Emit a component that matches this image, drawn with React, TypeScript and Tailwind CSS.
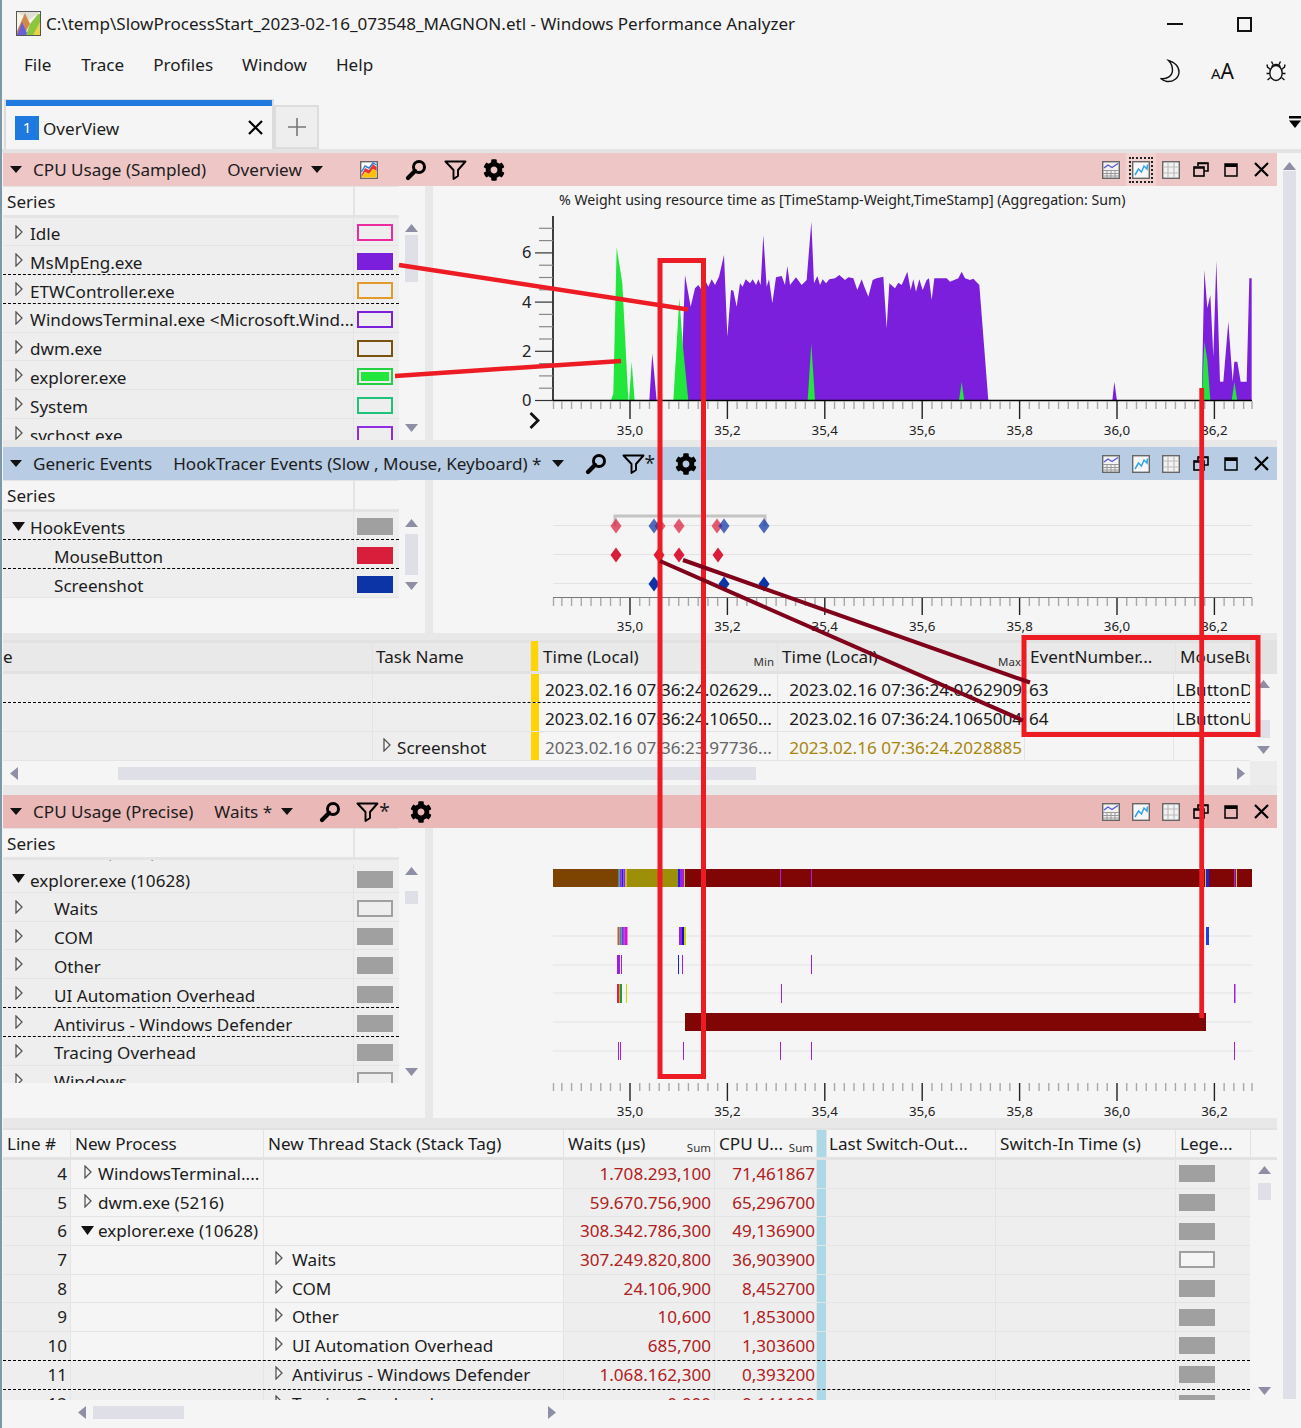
import React from 'react';
import { FaCog } from 'react-icons/fa';

type Pt = [number, number];
const zoomPts = (ox: number, pts: Pt[]) => pts.map(([x, y]) => `${ox + x / 3},${190 + y / 3}`).join(' ');

const purpleMain: Pt[] = [[487,632],[488,460],[495,255],[512,350],[525,295],[535,285],[545,300],[555,270],[565,290],[575,268],[585,285],[597,260],[612,195],[622,440],[633,300],[640,302],[650,350],[660,280],[668,290],[677,268],[690,280],[698,268],[708,285],[715,268],[722,285],[730,135],[740,290],[747,268],[757,340],[768,262],[785,258],[795,285],[802,228],[810,285],[828,262],[845,285],[860,270],[874,95],[882,280],[892,258],[900,285],[908,268],[918,280],[928,268],[945,265],[958,255],[975,270],[985,262],[1000,265],[1012,300],[1025,268],[1033,290],[1045,320],[1058,270],[1070,265],[1090,260],[1100,415],[1108,280],[1125,295],[1135,278],[1145,285],[1162,245],[1172,300],[1180,268],[1188,305],[1198,268],[1208,300],[1220,270],[1227,265],[1235,330],[1243,265],[1280,265],[1290,275],[1315,265],[1325,245],[1335,265],[1350,270],[1360,266],[1378,285],[1405,632]];
const purpleSmall: Pt[][] = [
  [[388,632],[397,490],[410,632]],
  [[1777,632],[1783,575],[1791,632]],
  [[2045,632],[2053,240],[2062,355],[2071,315],[2080,500],[2089,212],[2100,575],[2110,575],[2125,395],[2138,575],[2143,515],[2152,515],[2162,575],[2180,575],[2188,265],[2195,265],[2195,632]],
];
const greens: Pt[][] = [
  [[273,632],[280,610],[290,172],[307,280],[325,632]],
  [[327,632],[335,515],[344,632]],
  [[460,632],[478,325],[488,460],[505,632]],
  [[863,632],[874,460],[885,632]],
  [[1317,632],[1325,575],[1333,632]],
  [[2045,632],[2053,455],[2062,510],[2071,632]],
  [[2135,632],[2143,575],[2152,632]],
];

const majors = [35.0, 35.2, 35.4, 35.6, 35.8, 36.0, 36.2];
const majorX = (i: number) => 630 + 97.4 * i;
const minorXs: number[] = [];
for (let i = -8; i <= 64; i++) { if (i % 10 !== 0) minorXs.push(Math.min(1252, Math.max(553.5, 630 + 9.74 * i))); }

function AxisTicks({ y0, minorH, majorH, labelY, majorColor = '#222' }: { y0: number; minorH: number; majorH: number; labelY: number; majorColor?: string }) {
  return (
    <g>
      {minorXs.map((x, i) => <line key={i} x1={x} x2={x} y1={y0} y2={y0 + minorH} stroke="#a8a8a8" strokeWidth="1.4" />)}
      {majors.map((m, i) => <line key={m} x1={majorX(i)} x2={majorX(i)} y1={y0} y2={y0 + majorH} stroke={majorColor} strokeWidth="1.4" />)}
      {majors.map((m, i) => <text key={m} x={majorX(i)} y={labelY} textAnchor="middle" fontSize="13.3" fill="#222">{m.toFixed(1).replace('.', ',')}</text>)}
    </g>
  );
}

function Closed({ className = '' }: { className?: string }) {
  return <svg width="8" height="14" viewBox="0 0 8 14" className={className}><path d="M1 1 L7 7 L1 13 Z" fill="#f5f5f5" stroke="#555" strokeWidth="1.3" /></svg>;
}
function Open({ className = '' }: { className?: string }) {
  return <svg width="13" height="9" viewBox="0 0 13 9" className={className}><path d="M0 0 H13 L6.5 9 Z" fill="#111" /></svg>;
}
function Caret() { return <svg width="12" height="7" viewBox="0 0 12 7"><path d="M0 0 H12 L6 7 Z" fill="#111" /></svg>; }

function Magnifier() {
  return <svg width="22" height="22" viewBox="0 0 22 22"><circle cx="14" cy="8" r="5.5" fill="none" stroke="#000" strokeWidth="3" /><path d="M10 12 L3 19" stroke="#000" strokeWidth="4.2" strokeLinecap="round" /></svg>;
}
function Funnel() {
  return <svg width="23" height="20" viewBox="0 0 23 20"><path d="M1.5 1.5 H21.5 L14 10 V16 L9.5 19 V10 Z" fill="none" stroke="#000" strokeWidth="1.9" strokeLinejoin="round" /></svg>;
}
function ColorIcon() {
  return (
    <svg width="18" height="18" viewBox="0 0 18 18">
      <rect x="0.7" y="0.7" width="16.6" height="16.6" fill="#fff" stroke="#666" strokeWidth="1.4" />
      <path d="M1.5 14 L5 7 L9 9 L13 3 L16.5 6 V10 L13 8 L9 13 L5 11 L1.5 16 Z" fill="#e53935" />
      <path d="M1.5 16.5 L5 11 L9 13 L13 8 L16.5 10 V16.5 Z" fill="#ffc107" />
      <path d="M1.5 11 L5 5 L9 7 L13 2 L16.5 4" fill="none" stroke="#2e7fd6" strokeWidth="1.4" />
    </svg>
  );
}
function TableChartIcon() {
  return (
    <svg width="18" height="18" viewBox="0 0 18 18">
      <rect x="0.7" y="0.7" width="16.6" height="16.6" fill="#f2f2f2" stroke="#666" strokeWidth="1.4" />
      <path d="M1 9.5 H17 M1 12.5 H17 M1 15 H17 M5 9.5 V17 M9 9.5 V17 M13 9.5 V17" stroke="#999" strokeWidth="1" />
      <path d="M2 7 L6 4 L10 6.5 L16 2.5" fill="none" stroke="#5b5bd6" strokeWidth="1.4" />
    </svg>
  );
}
function ChartIcon() {
  return (
    <svg width="18" height="18" viewBox="0 0 18 18">
      <rect x="0.7" y="0.7" width="16.6" height="16.6" fill="#f7f7f7" stroke="#666" strokeWidth="1.4" />
      <path d="M3 14 L6.5 8 L9.5 11 L12 5 L15 8 L15.5 3.5" fill="none" stroke="#2fa4e7" strokeWidth="1.5" />
    </svg>
  );
}
function GridIcon() {
  return (
    <svg width="18" height="18" viewBox="0 0 18 18">
      <rect x="0.7" y="0.7" width="16.6" height="16.6" fill="#f2f2f2" stroke="#666" strokeWidth="1.4" />
      <path d="M1 6 H17 M1 12 H17 M6 1 V17 M12 1 V17" stroke="#bbb" strokeWidth="1.2" />
    </svg>
  );
}
function Restore() {
  return <svg width="16" height="15" viewBox="0 0 16 15"><path d="M5 4 V1 H15 V9 H11" fill="none" stroke="#000" strokeWidth="1.6" /><rect x="1" y="5" width="10" height="9" fill="none" stroke="#000" strokeWidth="1.6" /><path d="M5 1.5 H15 M1 6 H11" stroke="#000" strokeWidth="1.6" /></svg>;
}
function Maxi() {
  return <svg width="14" height="14" viewBox="0 0 14 14"><rect x="1" y="1" width="12" height="12" fill="none" stroke="#000" strokeWidth="1.5" /><rect x="1" y="1" width="12" height="3" fill="#000" /></svg>;
}
function CloseX({ size = 15 }: { size?: number }) {
  return <svg width={size} height={size} viewBox="0 0 15 15"><path d="M1 1 L14 14 M14 1 L1 14" stroke="#000" strokeWidth="2.2" /></svg>;
}

function WindowIcons({ active }: { active?: boolean }) {
  return (
    <div className="flex h-full items-center">
      <div className="flex w-[30px] justify-center"><TableChartIcon /></div>
      <div className={active ? 'flex h-full w-[30px] items-center justify-center bg-[#f3d2d2]' : 'flex w-[30px] justify-center'}>
        <div className={active ? 'flex h-[26px] w-[24px] items-center justify-center border-2 border-dotted border-[#222]' : 'flex'}><ChartIcon /></div>
      </div>
      <div className="flex w-[30px] justify-center"><GridIcon /></div>
      <div className="flex w-[30px] justify-center"><Restore /></div>
      <div className="flex w-[30px] justify-center"><Maxi /></div>
      <div className="flex w-[30px] justify-center"><CloseX /></div>
    </div>
  );
}

function HeaderBar({ bg, children, active }: { bg: string; children: React.ReactNode; active?: boolean }) {
  return (
    <div className={`flex h-[33px] items-center justify-between pl-[7px] pr-[1px] ${bg}`}>
      <div className="flex h-full items-center">{children}</div>
      <WindowIcons active={active} />
    </div>
  );
}

type RowT = { label: string; open?: boolean; closed?: boolean; indent?: boolean; swatch: string; dashed?: boolean };

function SeriesRow({ r }: { r: RowT }) {
  return (
    <div className={`flex h-[28.8px] shrink-0 border-b ${r.dashed ? 'border-dashed border-black' : 'border-[#e4e4e4]'} bg-[#eeeeee]`}>
      <div className="relative flex w-[351px] items-center border-r border-[#e4e4e4]">
        {r.closed && <Closed className="absolute left-[12px] top-[7px]" />}
        {r.open && <Open className="absolute left-[9px] top-[10px]" />}
        <span className={`mt-[5px] whitespace-nowrap text-[17.1px] ${r.indent ? 'pl-[51px]' : 'pl-[27px]'}`}>{r.label}</span>
      </div>
      <div className="flex flex-1 items-center pl-[3px]"><div className={`mt-[3px] h-[17px] w-[36px] ${r.swatch}`} /></div>
    </div>
  );
}

function SeriesHead() {
  return (
    <div className="flex h-[31.5px] shrink-0 gap-[1px] border-b-[3px] border-[#e4e4e4] bg-[#e4e4e4] pt-[1px]">
      <div className="flex w-[350px] items-center bg-[#f5f5f5] pl-[4px] pt-[3px] text-[17.1px]">Series</div>
      <div className="ml-[1px] w-[44px] bg-[#f5f5f5]" />
    </div>
  );
}

function ArrowUp() { return <svg width="13" height="8" viewBox="0 0 13 8" className="shrink-0"><path d="M0 8 L6.5 0 L13 8 Z" fill="#8e8ea6" /></svg>; }
function ArrowDown() { return <svg width="13" height="8" viewBox="0 0 13 8" className="shrink-0"><path d="M0 0 H13 L6.5 8 Z" fill="#8e8ea6" /></svg>; }
function ArrowLeft() { return <svg width="8" height="13" viewBox="0 0 8 13" className="shrink-0"><path d="M8 0 V13 L0 6.5 Z" fill="#8e8ea6" /></svg>; }
function ArrowRight() { return <svg width="8" height="13" viewBox="0 0 8 13" className="shrink-0"><path d="M0 0 V13 L8 6.5 Z" fill="#8e8ea6" /></svg>; }

function VScroll({ className, thumb }: { className: string; thumb: string }) {
  return (
    <div className={`flex w-[13px] flex-col items-center ${className}`}>
      <ArrowUp />
      <div className={`w-[13px] shrink-0 bg-[#dfdfe8] ${thumb}`} />
      <div className="flex-1" />
      <ArrowDown />
    </div>
  );
}

const chartRed = '#ed1c24';

function Chart1() {
  return (
    <svg viewBox="433 186 844 254" width="844" height="254" className="block overflow-visible">
      <text x="559" y="205" fontSize="14.15" fill="#222">% Weight using resource time as [TimeStamp-Weight,TimeStamp] (Aggregation: Sum)</text>
      <polygon points={zoomPts(520, purpleMain)} fill="#7b1fdc" />
      {purpleSmall.map((p, i) => <polygon key={i} points={zoomPts(520, p)} fill="#7b1fdc" />)}
      {greens.map((p, i) => <polygon key={i} points={zoomPts(520, p)} fill="#22e63c" />)}
      <line x1="553" x2="553" y1="216" y2="401" stroke="#111" strokeWidth="1.6" />
      {Array.from({ length: 15 }, (_, i) => i).map((i) => (
        <line key={i} x1={i % 4 === 0 ? 535 : 539} x2="553" y1={400.5 - i * 12.3} y2={400.5 - i * 12.3} stroke={i % 4 === 0 ? '#333' : '#888'} strokeWidth="1.2" />
      ))}
      {[0, 2, 4, 6].map((v, i) => <text key={v} x="522" y={406 - i * 49.2} fontSize="16.5" fill="#222">{v}</text>)}
      <line x1="553" x2="1252" y1="400.5" y2="400.5" stroke="#000" strokeWidth="1.5" />
      <AxisTicks y0={401} minorH={8} majorH={18} labelY={435} />
      <path d="M530.5 413 L538 420.5 L530.5 428" fill="none" stroke="#111" strokeWidth="2.8" />
    </svg>
  );
}

function Diamond({ x, y, color, op = 1 }: { x: number; y: number; color: string; op?: number }) {
  return <polygon points={`${x - 5.5},${y} ${x},${y - 7.5} ${x + 5.5},${y} ${x},${y + 7.5}`} fill={color} opacity={op} />;
}

function Chart2() {
  const red = '#d91e3c';
  const blue = '#0c34a6';
  return (
    <svg viewBox="433 480 844 153" width="844" height="153" className="block overflow-visible">
      {[525.5, 554.5, 583.5].map((y) => <line key={y} x1="553" x2="1252" y1={y} y2={y} stroke="#e3e3e3" strokeWidth="1" />)}
      <path d="M615 526 V516 H765 V526" fill="none" stroke="#c4c4c4" strokeWidth="3" />
      {[616, 660, 679, 717].map((x) => <Diamond key={x} x={x} y={526} color={red} op={0.72} />)}
      {[654, 724, 764].map((x) => <Diamond key={x} x={x} y={526} color={blue} op={0.72} />)}
      {[616, 659, 679, 718].map((x) => <Diamond key={x} x={x} y={555} color={red} />)}
      {[654, 724, 764].map((x) => <Diamond key={x} x={x} y={584} color={blue} />)}
      <line x1="553" x2="1252" y1="597.5" y2="597.5" stroke="#777" strokeWidth="1.2" />
      <AxisTicks y0={598} minorH={8} majorH={17} labelY={631} />
    </svg>
  );
}

function Chart3() {
  const P = '#a020e0';
  const bars: [number, number, number, number, string][] = [
    [553, 869, 65, 18, '#7d4300'], [627, 869, 51, 18, '#9e8f08'], [685, 869, 567, 18, '#7f0604'],
    [618, 869, 1.5, 18, '#18a860'], [619.5, 869, 2, 18, P], [621.5, 869, 2, 18, '#2020e0'], [623.5, 869, 2, 18, P], [625.5, 869, 1.5, 18, '#c8c800'],
    [678, 869, 2, 18, '#2020e0'], [680, 869, 4, 18, P], [684, 869, 1, 18, '#c8c800'],
    [780, 869, 1, 18, P], [811, 869, 1, 18, P], [1205, 869, 1, 18, '#c8c800'], [1206, 869, 3, 18, '#2020e0'], [1234, 869, 1.5, 18, P], [1236, 869, 1, 18, '#c8c800'],
    [617.5, 927, 2, 18, '#e05030'], [619.5, 927, 2, 18, '#18a890'], [621.5, 927, 2, 18, P], [623.5, 927, 1, 18, '#2020e0'], [624.5, 927, 3, 18, '#e010d0'],
    [679, 927, 3, 18, P], [682, 927, 2, 18, '#1010d0'], [684, 927, 2, 18, '#c8d800'], [1206, 927, 3, 18, '#2040e0'],
    [617, 955, 3, 19, P], [621, 955, 1, 19, P], [678, 955, 1, 19, '#2020e0'], [682, 955, 1, 19, P], [811, 955, 1, 19, P],
    [617, 984, 2, 19, '#d02060'], [619, 984, 1, 19, '#e8a020'], [620, 984, 2, 19, '#18a040'], [626, 984, 1, 19, '#c8d800'], [781, 984, 1, 19, P], [1234, 984, 1.5, 19, P],
    [685, 1013, 521, 18, '#7f0604'],
    [618, 1042, 1, 18, P], [620, 1042, 1, 18, P], [683, 1042, 1, 18, P], [780, 1042, 1, 18, P], [811, 1042, 1, 18, P], [1234, 1042, 1, 18, P],
  ];
  return (
    <svg viewBox="433 828 844 290" width="844" height="290" className="block overflow-visible">
      {[936, 965, 993, 1022, 1051].map((y) => <line key={y} x1="553" x2="1252" y1={y} y2={y} stroke="#e3e3e3" strokeWidth="1" />)}
      {bars.map(([x, y, w, h, c], i) => <rect key={i} x={x} y={y} width={w} height={h} fill={c} />)}
      <AxisTicks y0={1083} minorH={8} majorH={18} labelY={1116} />
    </svg>
  );
}

const rows1: RowT[] = [
  { label: 'Idle', closed: true, swatch: 'border-2 border-[#ec2ba0]' },
  { label: 'MsMpEng.exe', closed: true, swatch: 'bg-[#7b1fdc]', dashed: true },
  { label: 'ETWController.exe', closed: true, swatch: 'border-2 border-[#e29a2a]', dashed: true },
  { label: 'WindowsTerminal.exe <Microsoft.Wind...', closed: true, swatch: 'border-2 border-[#7b1fdc]' },
  { label: 'dwm.exe', closed: true, swatch: 'border-2 border-[#7a5210]' },
  { label: 'explorer.exe', closed: true, swatch: 'border-2 border-[#22d040] bg-[#22e63c] bg-clip-content p-[2px]' },
  { label: 'System', closed: true, swatch: 'border-2 border-[#1fc27a]' },
  { label: 'svchost.exe', closed: true, swatch: 'border-2 border-[#8e2ee0]' },
];
const rows2: RowT[] = [
  { label: 'HookEvents', open: true, swatch: 'bg-[#a0a0a0]', dashed: true },
  { label: 'MouseButton', indent: true, swatch: 'bg-[#d91e3c]', dashed: true },
  { label: 'Screenshot', indent: true, swatch: 'bg-[#0c34a6]' },
];
const rows3: RowT[] = [
  { label: 'explorer.exe (10628)', open: true, swatch: 'bg-[#a0a0a0]' },
  { label: 'Waits', closed: true, indent: true, swatch: 'border-2 border-[#a0a0a0]' },
  { label: 'COM', closed: true, indent: true, swatch: 'bg-[#a0a0a0]' },
  { label: 'Other', closed: true, indent: true, swatch: 'bg-[#a0a0a0]' },
  { label: 'UI Automation Overhead', closed: true, indent: true, swatch: 'bg-[#a0a0a0]', dashed: true },
  { label: 'Antivirus - Windows Defender', closed: true, indent: true, swatch: 'bg-[#a0a0a0]', dashed: true },
  { label: 'Tracing Overhead', closed: true, indent: true, swatch: 'bg-[#a0a0a0]' },
  { label: 'Windows', closed: true, indent: true, swatch: 'border-2 border-[#a0a0a0]' },
];

type B = { line: string; proc?: string; procOpen?: boolean; stack?: string; waits: string; cpu: string; hollow?: boolean; dashed?: boolean; sel?: boolean };
const rowsB: B[] = [
  { line: '4', proc: 'WindowsTerminal....', waits: '1.708.293,100', cpu: '71,461867' },
  { line: '5', proc: 'dwm.exe (5216)', waits: '59.670.756,900', cpu: '65,296700' },
  { line: '6', proc: 'explorer.exe (10628)', procOpen: true, waits: '308.342.786,300', cpu: '49,136900' },
  { line: '7', stack: 'Waits', waits: '307.249.820,800', cpu: '36,903900', hollow: true },
  { line: '8', stack: 'COM', waits: '24.106,900', cpu: '8,452700' },
  { line: '9', stack: 'Other', waits: '10,600', cpu: '1,853000' },
  { line: '10', stack: 'UI Automation Overhead', waits: '685,700', cpu: '1,303600', dashed: true },
  { line: '11', stack: 'Antivirus - Windows Defender', waits: '1.068.162,300', cpu: '0,393200', dashed: true, sel: true },
  { line: '12', stack: 'Tracing Overhead', waits: '0,000', cpu: '0,141100', sel: true },
];

function BCell({ className, children }: { className: string; children?: React.ReactNode }) {
  return <div className={`relative flex h-full shrink-0 items-center border-r border-[#e4e4e4] ${className}`}>{children}</div>;
}

function BottomRow({ r }: { r: B }) {
  const side = r.sel ? 'bg-[#eeeeee]' : 'bg-[#f5f5f5]';
  return (
    <div className={`flex h-[28.7px] shrink-0 border-b ${r.dashed ? 'border-dashed border-black' : 'border-[#e4e4e4]'} bg-[#eeeeee] text-[17.1px]`}>
      <BCell className="w-[68px] justify-end pr-[3px]">{r.line}</BCell>
      <BCell className={`w-[193px] pl-[27px] ${side}`}>
        {r.proc && (r.procOpen ? <Open className="absolute left-[10px] top-[9px]" /> : <Closed className="absolute left-[13px] top-[5px]" />)}
        <span className="whitespace-nowrap">{r.proc}</span>
      </BCell>
      <BCell className={`w-[300px] pl-[28px] ${side}`}>
        {r.stack && <Closed className="absolute left-[11px] top-[5px]" />}
        <span className="whitespace-nowrap">{r.stack}</span>
      </BCell>
      <BCell className="w-[151px] justify-end pr-[3px] text-[#b0201c]">{r.waits}</BCell>
      <BCell className="w-[102px] justify-end pr-[1px] text-[#b0201c]">{r.cpu}</BCell>
      <div className="h-full w-[9px] shrink-0 bg-[#add8e6]" />
      <BCell className="w-[170px]" />
      <BCell className="w-[180px]" />
      <div className="flex h-full w-[75px] items-center pl-[3px]">
        <div className={`h-[17px] w-[36px] ${r.hollow ? 'border-2 border-[#a0a0a0] bg-[#f5f5f5]' : 'bg-[#a0a0a0]'}`} />
      </div>
    </div>
  );
}

function HeadCell({ className, children, tag, tagClass = 'right-[3px]' }: { className: string; children: React.ReactNode; tag?: string; tagClass?: string }) {
  return (
    <div className={`relative flex h-full shrink-0 items-center overflow-hidden whitespace-nowrap ${className}`}>
      {children}
      {tag && <span className={`absolute bottom-[1px] text-[11.5px] text-[#333] ${tagClass}`}>{tag}</span>}
    </div>
  );
}

function Table2() {
  const Row = ({ a, b, c, d, task, dash, muted }: { a: string; b: string; c?: string; d?: string; task?: string; dash?: boolean; muted?: boolean }) => (
    <div className={`flex h-[29px] shrink-0 border-b ${dash ? 'border-dashed border-black' : 'border-[#e4e4e4]'} text-[17.1px]`}>
      <div className="h-full w-[370px] shrink-0 border-r border-[#e4e4e4] bg-[#eeeeee]" />
      <div className="relative flex h-full w-[158px] shrink-0 items-center bg-[#eeeeee] pl-[24px] pt-[4px]">
        {task && <Closed className="absolute left-[10px] top-[6px]" />}
        {task}
      </div>
      <div className="h-full w-[8px] shrink-0 bg-[#ffd400]" />
      <div className={`flex h-full w-[239px] shrink-0 items-center overflow-hidden border-r border-[#e4e4e4] pl-[6px] pt-[4px] whitespace-nowrap ${muted ? 'text-[#666]' : ''}`}>{a}</div>
      <div className={`flex h-full w-[247px] shrink-0 items-center justify-end overflow-hidden border-r border-[#e4e4e4] pr-[2px] pt-[4px] whitespace-nowrap ${muted ? 'text-[#a8860b]' : ''}`}>{b}</div>
      <div className="flex h-full w-[149px] shrink-0 items-center border-r border-[#e4e4e4] pl-[4px] pt-[4px]">{c}</div>
      <div className="flex h-full w-[76px] shrink-0 items-center overflow-hidden whitespace-nowrap pl-[2px] pt-[4px]">{d}</div>
    </div>
  );
  return (
    <div className="flex h-[145px] flex-col">
      <div className="h-[34px] shrink-0 border-b-[3px] border-[#e2e2e2] bg-[#e2e2e2] pt-[3px]">
        <div className="flex h-full w-[1247px] gap-[1px] text-[17.1px]">
          <HeadCell className="w-[369px] bg-[#e9e9e9]">e</HeadCell>
          <HeadCell className="w-[157px] bg-[#e9e9e9] pl-[3px]">Task Name</HeadCell>
          <div className="mt-[-2px] h-[calc(100%+2px)] w-[7px] shrink-0 bg-[#ffd400]" />
          <HeadCell className="w-[238px] bg-[#e9e9e9] pl-[4px]" tag="Min">Time (Local)</HeadCell>
          <HeadCell className="w-[248px] bg-[#e9e9e9] pl-[4px]" tag="Max" tagClass="right-[5px]">Time (Local)</HeadCell>
          <HeadCell className="w-[148px] bg-[#e9e9e9] pl-[3px]">EventNumber...</HeadCell>
          <HeadCell className="w-[74px] bg-[#e9e9e9] pl-[4px]">MouseBu</HeadCell>
        </div>
      </div>
      <div className="flex h-[87px] shrink-0">
        <div className="flex w-[1247px] flex-col">
          <Row a="2023.02.16 07:36:24.02629..." b="2023.02.16 07:36:24.0262909" c="63" d="LButtonD" dash />
          <Row a="2023.02.16 07:36:24.10650..." b="2023.02.16 07:36:24.1065004" c="64" d="LButtonU" />
          <Row a="2023.02.16 07:36:23.97736..." b="2023.02.16 07:36:24.2028885" task="Screenshot" muted />
        </div>
        <div className="flex flex-1 justify-start pl-[7px] pt-[6px]">
          <VScroll className="h-[74px]" thumb="mt-[32px] h-[18px]" />
        </div>
      </div>
      <div className="flex h-[24px] items-center">
        <div className="flex h-full w-[1247px] items-center bg-[#f5f5f5] pl-[7px] pr-[5px]">
          <ArrowLeft />
          <div className="ml-[100px] h-[13px] w-[638px] bg-[#dfdfe8]" />
          <div className="flex-1" />
          <ArrowRight />
        </div>
        <div className="h-full flex-1 bg-[#ececec]" />
      </div>
    </div>
  );
}

function BottomTable() {
  return (
    <div className="flex h-[297px] flex-col">
      <div className="flex h-[32px] shrink-0 gap-[1px] border-y-[2px] border-b-[3px] border-[#e2e2e2] bg-[#e2e2e2] text-[17.1px]" >
        <HeadCell className="w-[67px] bg-[#f5f5f5] pl-[4px]">Line #</HeadCell>
        <HeadCell className="w-[192px] bg-[#f5f5f5] pl-[4px]">New Process</HeadCell>
        <HeadCell className="w-[299px] bg-[#f5f5f5] pl-[4px]">New Thread Stack (Stack Tag)</HeadCell>
        <HeadCell className="w-[150px] bg-[#f5f5f5] pl-[4px]" tag="Sum">Waits (µs)</HeadCell>
        <HeadCell className="w-[101px] bg-[#f5f5f5] pl-[4px]" tag="Sum">CPU U...</HeadCell>
        <div className="h-full w-[9px] shrink-0 bg-[#add8e6]" />
        <HeadCell className="w-[168px] bg-[#f5f5f5] pl-[2px]">Last Switch-Out...</HeadCell>
        <HeadCell className="w-[179px] bg-[#f5f5f5] pl-[4px]">Switch-In Time (s)</HeadCell>
        <HeadCell className="w-[74px] bg-[#f5f5f5] pl-[4px]">Lege...</HeadCell>
        <div className="h-full flex-1 bg-[#f5f5f5]" />
      </div>
      <div className="flex h-[240px] shrink-0">
        <div className="flex w-[1247px] flex-col overflow-hidden">
          {rowsB.map((r) => <BottomRow key={r.line} r={r} />)}
        </div>
        <div className="flex flex-1 pl-[8px] pt-[6px]">
          <VScroll className="h-[229px]" thumb="mt-[9px] h-[17px]" />
        </div>
      </div>
      <div className="flex h-[25px] items-center pl-[75px]">
        <ArrowLeft />
        <div className="ml-[7px] h-[13px] w-[91px] bg-[#dfdfe8]" />
        <div className="ml-[364px]"><ArrowRight /></div>
      </div>
    </div>
  );
}

function SeriesColumn({ children, scroll, h }: { children: React.ReactNode; scroll: React.ReactNode; h: string }) {
  return (
    <div className={`flex w-[422px] shrink-0 ${h}`}>
      <div className="flex w-[396px] shrink-0 flex-col overflow-hidden">{children}</div>
      <div className="ml-[6px] flex flex-col">{scroll}</div>
    </div>
  );
}

function Band({ className }: { className: string }) {
  return <div className={`shrink-0 bg-[#e8e8e8] ${className}`} />;
}

function AppIcon() {
  return (
    <svg width="25" height="25" viewBox="0 0 25 25">
      <rect x="0.5" y="0.5" width="24" height="24" fill="#f8f4e8" stroke="#555" />
      <path d="M1 1 H24 L13 9 Z" fill="#e0e0d8" />
      <path d="M1 20 L9 2 L14 13 L8 24 H1 Z" fill="#d08a4a" />
      <path d="M1 24 L6 11 L12 24 Z" fill="#6a5fd8" />
      <path d="M10 24 L14 13 L22 3 L24 3 V24 Z" fill="#8cc63f" />
      <path d="M17 24 L24 11 V24 Z" fill="#e8d24a" />
    </svg>
  );
}

function Moon() {
  return <svg width="22" height="24" viewBox="0 0 22 24"><path d="M9.5 1.5 C15 3 20 7 20 13 C20 19 14 23 8 22.5 C5.5 22.2 3.5 21 1.5 19.5 C8 20.5 13.5 17 13.5 11 C13.5 7 12 4 9.5 1.5 Z" fill="none" stroke="#111" strokeWidth="1.4" /></svg>;
}

function BugIcon() {
  return (
    <svg width="22" height="22" viewBox="0 0 22 22" fill="none" stroke="#111" strokeWidth="1.4">
      <ellipse cx="11" cy="13" rx="6.2" ry="7.5" />
      <path d="M7 7 C7 3.5 15 3.5 15 7" />
      <path d="M8 4.5 L6.5 1.5 M14 4.5 L15.5 1.5" />
      <path d="M5.5 9.5 L2.5 7 L2 4.5 M16.5 9.5 L19.5 7 L20 4.5" />
      <path d="M4.8 13.5 H1.5 M17.2 13.5 H20.5" />
      <path d="M5.5 17.5 L2.5 20 M16.5 17.5 L19.5 20" />
    </svg>
  );
}

export default function App() {
  return (
    <div className="relative h-[1428px] w-[1301px] overflow-hidden bg-[#f5f5f5] font-['Noto_Sans',sans-serif] text-[#1c1c1c]">
      {/* Title bar */}
      <div className="flex h-[48px] items-center">
        <div className="ml-[16px] mt-[-1px]"><AppIcon /></div>
        <div className="ml-[5px] whitespace-nowrap text-[17.07px]">C:\temp\SlowProcessStart_2023-02-16_073548_MAGNON.etl - Windows Performance Analyzer</div>
        <div className="flex-1" />
        <div className="h-[2px] w-[16px] bg-[#111]" />
        <div className="ml-[54px] mr-[49px] h-[15px] w-[15px] border-2 border-[#111]" />
      </div>
      {/* Menu bar */}
      <div className="flex h-[51px] items-start">
        <div className="flex gap-[29px] pl-[24px] pt-[4px] text-[17.1px]">
          <span>File</span><span className="ml-[1px]">Trace</span><span>Profiles</span><span>Window</span><span>Help</span>
        </div>
        <div className="flex-1" />
        <div className="flex items-center pr-[14px] pt-[11px]">
          <Moon />
          <div className="ml-[30px] flex items-baseline text-[#111]"><span className="text-[15px] leading-none">A</span><span className="text-[21px] leading-none">A</span></div>
          <div className="ml-[31px] flex"><BugIcon /></div>
        </div>
      </div>
      {/* Tabs */}
      <div className="flex h-[54px] items-stretch border-b-[4px] border-[#e3e3e3]">
        <div className="ml-[4px] flex w-[270px] flex-col border-x-2 border-t-[1px] border-[#dcdcdc]">
          <div className="h-[6px] bg-[#1f7ae0]" />
          <div className="flex flex-1 items-center pl-[9px] pr-[9px]">
            <div className="flex h-[24px] w-[24px] items-center justify-center bg-[#1f7ae0] text-[15px] text-white">1</div>
            <div className="ml-[4px] mt-[2px] text-[17.1px]">OverView</div>
            <div className="flex-1" />
            <CloseX />
          </div>
        </div>
        <div className="mt-[6px] flex w-[45px] items-center justify-center border-2 border-[#dcdcdc] bg-[#eeeeee]">
          <svg width="20" height="20" viewBox="0 0 20 20"><path d="M10 1 V19 M1 10 H19" stroke="#777" strokeWidth="1.6" /></svg>
        </div>
        <div className="flex-1" />
        <div className="flex flex-col items-end pt-[17px]">
          <svg width="12" height="14" viewBox="0 0 12 14"><rect y="0" width="12" height="2.5" fill="#000" /><path d="M0 4.5 H12 L6 12 Z" fill="#000" /></svg>
        </div>
      </div>

      <div className="flex">
        <div className="ml-[3px] flex w-[1274px] flex-col">
          {/* Panel 1 */}
          <HeaderBar bg="bg-[#efc6c6]" active>
            <Caret />
            <span className="ml-[11px] text-[17.1px]">CPU Usage (Sampled)</span>
            <span className="ml-[21px] text-[17.1px]">Overview</span>
            <span className="ml-[9px] flex"><Caret /></span>
            <span className="ml-[37px] flex"><ColorIcon /></span>
            <span className="ml-[27px] flex"><Magnifier /></span>
            <span className="ml-[17px] flex"><Funnel /></span>
            <span className="ml-[16px] flex"><FaCog size={22} color="#000" /></span>
          </HeaderBar>
          <div className="flex h-[254px]">
            <SeriesColumn h="h-[254px]" scroll={<VScroll className="h-[208px] mt-[38px]" thumb="mt-[3px] h-[47px]" />}>
              <SeriesHead />
              {rows1.map((r) => <SeriesRow key={r.label} r={r} />)}
            </SeriesColumn>
            <Band className="w-[8px]" />
            <Chart1 />
          </div>
          <Band className="h-[7px]" />
          {/* Panel 2 */}
          <HeaderBar bg="bg-[#b8cce4]">
            <Caret />
            <span className="ml-[11px] text-[17.1px]">Generic Events</span>
            <span className="ml-[21px] whitespace-nowrap text-[17.1px]">HookTracer Events (Slow , Mouse, Keyboard) *</span>
            <span className="ml-[10px] flex"><Caret /></span>
            <span className="ml-[21px] flex"><Magnifier /></span>
            <span className="ml-[15px] flex items-start"><Funnel /></span>
            <span className="text-[19px] leading-none">*</span>
            <span className="ml-[20px] flex"><FaCog size={22} color="#000" /></span>
          </HeaderBar>
          <div className="flex h-[153px]">
            <SeriesColumn h="h-[153px]" scroll={<VScroll className="h-[71px] mt-[39px]" thumb="mt-[7px] h-[41px]" />}>
              <SeriesHead />
              {rows2.map((r) => <SeriesRow key={r.label} r={r} />)}
            </SeriesColumn>
            <Band className="w-[8px]" />
            <Chart2 />
          </div>
          <Band className="h-[7px]" />
          <Table2 />
          <Band className="h-[10px]" />
          {/* Panel 3 */}
          <HeaderBar bg="bg-[#ebb8b8]">
            <Caret />
            <span className="ml-[11px] text-[17.1px]">CPU Usage (Precise)</span>
            <span className="ml-[21px] text-[17.1px]">Waits *</span>
            <span className="ml-[9px] flex"><Caret /></span>
            <span className="ml-[26px] flex"><Magnifier /></span>
            <span className="ml-[15px] flex"><Funnel /></span>
            <span className="text-[19px] leading-none">*</span>
            <span className="ml-[20px] flex"><FaCog size={22} color="#000" /></span>
          </HeaderBar>
          <div className="flex h-[290px]">
            <div className="flex w-[422px] shrink-0 flex-col">
              <SeriesColumn h="h-[255px]" scroll={<VScroll className="h-[209px] mt-[39px]" thumb="mt-[16px] h-[13px]" />}>
                <SeriesHead />
                <div className="flex min-h-0 flex-1 flex-col overflow-hidden">
                  <div className="mt-[-24.5px] flex flex-col">
                    <div className="flex h-[29px] shrink-0 items-center bg-[#eeeeee] pl-[27px] pt-[5px] text-[17.1px]">dwm.exe (5216)</div>
                    {rows3.map((r) => <SeriesRow key={r.label} r={r} />)}
                  </div>
                </div>
              </SeriesColumn>
            </div>
            <Band className="w-[8px]" />
            <Chart3 />
          </div>
          <Band className="h-[10px]" />
          <BottomTable />
        </div>
        {/* Main vertical scrollbar */}
        <div className="ml-[6px] flex h-[1250px] w-[13px] flex-col items-center pt-[9px]">
          <ArrowUp />
          <div className="mt-[1px] h-[1228px] w-[13px] bg-[#dfdfe8]" />
        </div>
      </div>

      {/* Window edge */}
      <div className="absolute left-0 top-0 h-full w-[1.5px] bg-[#7d98a6]" />

      {/* Annotations drawn over the window */}
      <svg className="pointer-events-none absolute inset-0" width="1301" height="1428" viewBox="0 0 1301 1428">
        <line x1="399" y1="265" x2="688" y2="309.5" stroke={chartRed} strokeWidth="4.5" />
        <line x1="395" y1="376" x2="621" y2="361" stroke={chartRed} strokeWidth="4.5" />
        <rect x="660" y="260.5" width="43.5" height="816" fill="none" stroke={chartRed} strokeWidth="5" />
        <line x1="1201.7" y1="388" x2="1201.7" y2="1018" stroke={chartRed} strokeWidth="4.8" />
        <rect x="1024" y="637.5" width="234" height="97" fill="none" stroke={chartRed} strokeWidth="5" />
        <line x1="660" y1="561" x2="1023" y2="720.5" stroke="#7f0018" strokeWidth="4" />
        <line x1="683" y1="560" x2="1030" y2="682.5" stroke="#7f0018" strokeWidth="4" />
      </svg>
    </div>
  );
}
